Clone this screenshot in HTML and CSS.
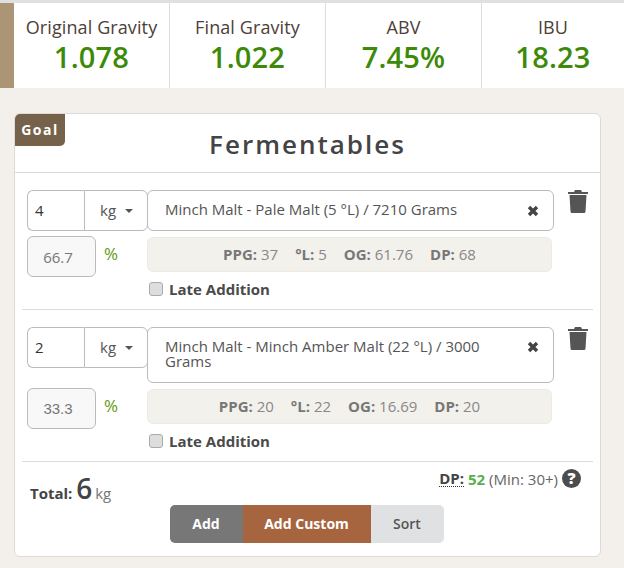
FILE: index.html
```html
<!DOCTYPE html>
<html lang="en">
<head>
    <meta charset="UTF-8">
    <meta name="viewport" content="width=device-width, initial-scale=1.0">
    <title>Fermentables</title>
    <link rel="stylesheet" href="styles.css">
</head>
<body>
    <div class="stats">
        <div class="stat"><div class="stat-label">Original Gravity</div><div class="stat-value">1.078</div></div>
        <div class="stat"><div class="stat-label">Final Gravity</div><div class="stat-value">1.022</div></div>
        <div class="stat"><div class="stat-label">ABV</div><div class="stat-value">7.45%</div></div>
        <div class="stat"><div class="stat-label">IBU</div><div class="stat-value">18.23</div></div>
    </div>

    <div class="card">
        <span class="goal">Goal</span>
        <h1 class="card-title">Fermentables</h1>

        <div class="row">
            <div class="amount">
                <input class="amount-input" type="text" value="4">
                <div class="unit">kg<span class="caret"></span></div>
            </div>
            <div class="picker">
                <span>Minch Malt - Pale Malt (5 °L) / 7210 Grams</span>
                <svg class="clear" viewBox="0 0 12 12"><path d="M2 2l8 8M10 2l-8 8"/></svg>
            </div>
            <svg class="trash" viewBox="0 0 20 23"><path d="M7 0h6l1 2h6v2H0V2h6zM1.500 5h17l-1 16.500q-.1 1.500-1.500 1.500H4q-1.400 0-1.500-1.500z"/></svg>

            <input class="percent" type="text" value="66.7">
            <span class="percent-sign">%</span>
            <div class="info">
                <span><b>PPG:</b> 37</span><span><b>°L:</b> 5</span><span><b>OG:</b> 61.76</span><span><b>DP:</b> 68</span>
            </div>

            <label class="late"><span class="check"></span>Late Addition</label>
        </div>

        <div class="row">
            <div class="amount">
                <input class="amount-input" type="text" value="2">
                <div class="unit">kg<span class="caret"></span></div>
            </div>
            <div class="picker picker-tall">
                <span>Minch Malt - Minch Amber Malt (22 °L) / 3000 Grams</span>
                <svg class="clear" viewBox="0 0 12 12"><path d="M2 2l8 8M10 2l-8 8"/></svg>
            </div>
            <svg class="trash" viewBox="0 0 20 23"><path d="M7 0h6l1 2h6v2H0V2h6zM1.500 5h17l-1 16.500q-.1 1.500-1.500 1.500H4q-1.400 0-1.500-1.500z"/></svg>

            <input class="percent percent-arial" type="text" value="33.3">
            <span class="percent-sign">%</span>
            <div class="info">
                <span><b>PPG:</b> 20</span><span><b>°L:</b> 22</span><span><b>OG:</b> 16.69</span><span><b>DP:</b> 20</span>
            </div>

            <label class="late"><span class="check"></span>Late Addition</label>
        </div>

        <div class="footer">
            <div class="total"><b>Total:</b> <span class="total-num">6</span> <span class="total-unit">kg</span></div>
            <div class="dp"><b class="dp-label">DP:</b> <b class="dp-num">52</b> (Min: 30+) <span class="help">?</span></div>
        </div>

        <div class="buttons">
            <button class="btn btn-add">Add</button>
            <button class="btn btn-custom">Add Custom</button>
            <button class="btn btn-sort">Sort</button>
        </div>
    </div>
</body>
</html>
```

FILE: styles.css
```css
* {
    box-sizing: border-box;
}
body {
    margin: 0;
    background-color: #f3f0ec;
    font-family: "Open Sans", sans-serif;
    color: #444;
}

/* stats bar */
.stats {
    display: grid;
    grid-template-columns: 155px 156px 156px 143px;
    height: 88px;
    margin-bottom: 25px;
    padding-left: 14px;
    background-color: #ab9575;
    border-top: 3px solid #e0e0e0;
}
.stat {
    background: white;
    border-left: 1px solid #e0dcd8;
    text-align: center;
    padding-top: 12px;
}
.stat:first-child {
    border-left: none;
}
.stat-label {
    font-size: 18px;
    line-height: 25px;
    letter-spacing: 0.1px;
    color: #4d4038;
}
.stat-value {
    font-size: 29px;
    line-height: 33px;
    font-weight: 600;
    letter-spacing: 0.2px;
    color: #3c8a08;
}

/* card */
.card {
    position: relative;
    width: 587px;
    height: 444px;
    margin-left: 14px;
    background: white;
    border: 1px solid #dedad6;
    border-radius: 6px;
}
.goal {
    position: absolute;
    top: 0;
    left: 0;
    width: 50px;
    height: 32px;
    background-color: #76624a;
    color: white;
    font-size: 14px;
    font-weight: 700;
    letter-spacing: 1.5px;
    line-height: 32px;
    text-align: center;
    border-radius: 5px 0 5px 0;
}
.card-title {
    margin: 0;
    height: 59px;
    border-bottom: 1px solid #dedad6;
    font-size: 26px;
    font-weight: 600;
    letter-spacing: 2px;
    line-height: 61px;
    text-align: center;
    color: #444;
}

/* fermentable row */
.row {
    display: grid;
    grid-template-columns: 69px 51px 407px 1fr;
    row-gap: 5px;
    margin: 0 7px;
    padding: 17px 5px 12px;
    border-bottom: 1px solid #dedad6;
}
.amount {
    grid-column: 1 / 3;
    display: flex;
    align-self: start;
    width: 121px;
    height: 41px;
}
.amount-input {
    width: 57px;
    height: 41px;
    padding: 0 7px 2px;
    border: 1px solid #bbb;
    border-right: none;
    border-radius: 6px 0 0 6px;
    font-family: "Open Sans", sans-serif;
    font-size: 15px;
    color: #333;
}
.unit {
    display: flex;
    align-items: center;
    flex: 1;
    padding: 0 0 2px 15px;
    border: 1px solid #bbb;
    border-radius: 0 6px 6px 0;
    font-size: 15px;
    color: #555;
}
.caret {
    margin: 2px 0 0 9px;
    border-top: 4px solid #555;
    border-left: 4px solid transparent;
    border-right: 4px solid transparent;
}
.picker {
    display: flex;
    align-items: center;
    justify-content: space-between;
    min-height: 41px;
    padding: 0 14px 2px 17px;
    border: 1px solid #bbb;
    border-radius: 6px;
    background: white;
    font-size: 15px;
    line-height: 15px;
    color: #555;
}
.picker span {
    max-width: 345px;
}
.picker-tall {
    height: 56px;
}
.picker-tall .clear {
    align-self: flex-start;
    margin-top: 13px;
}
.clear {
    flex: none;
    width: 12px;
    height: 12px;
    margin-top: 2px;
    fill: none;
    stroke: #444;
    stroke-width: 3.4;
}
.trash {
    width: 20px;
    height: 23px;
    margin-left: 14px;
    fill: #555;
}
.percent {
    width: 69px;
    height: 41px;
    padding: 0 7px 0 0;
    border: 1px solid #bbb;
    border-radius: 6px;
    background-color: #f8f8f8;
    font-family: "Open Sans", sans-serif;
    font-size: 15px;
    color: #777;
    text-align: center;
}
.percent-arial {
    font-family: "Liberation Sans", sans-serif;
}
.percent-sign {
    padding: 7px 0 0 8px;
    font-size: 17px;
    line-height: 22px;
    color: #5c9a10;
}
.info {
    display: flex;
    justify-content: center;
    gap: 17px;
    width: 405px;
    height: 35px;
    margin-top: 1px;
    background-color: #f3f1ec;
    border: 1px solid #eeebe6;
    border-radius: 6px;
    font-size: 15px;
    line-height: 33px;
    color: #888;
}
.info b {
    color: #777;
}
.late {
    grid-column: 3;
    display: flex;
    align-items: center;
    height: 16px;
    margin-top: -1px;
    padding-left: 2px;
    font-size: 15px;
    font-weight: 700;
    color: #4a4a4a;
}
.check {
    width: 14px;
    height: 14px;
    margin-right: 6px;
    background-color: #ddd;
    border: 1px solid #aaa;
    border-radius: 3px;
}

/* totals + buttons */
.footer {
    display: flex;
    justify-content: space-between;
    align-items: flex-start;
    height: 38px;
    padding: 6px 19px 0 15px;
}
.total {
    padding-top: 8px;
    font-size: 15px;
    line-height: 24px;
}
.total-num {
    font-size: 28px;
    font-weight: 600;
}
.total-unit {
    margin-left: -1px;
    color: #777;
}
.dp {
    font-size: 15px;
    line-height: 22px;
    color: #666;
    display: flex;
    align-items: center;
    gap: 4px;
}
.dp-label {
    margin-left: -1px;
    color: #444;
    border-bottom: 1px dotted #333;
    line-height: 15px;
}
.dp-num {
    color: #55b04d;
}
.help {
    width: 19px;
    height: 19px;
    margin-top: -1px;
    border-radius: 50%;
    background-color: #4d4d4d;
    color: white;
    font-size: 16px;
    font-weight: 800;
    line-height: 19px;
    text-align: center;
}
.buttons {
    display: flex;
    justify-content: center;
    margin-top: 5px;
    padding-right: 2px;
}
.btn {
    height: 38px;
    padding: 0 0 2px;
    border: none;
    font-family: "Open Sans", sans-serif;
    font-size: 14px;
    font-weight: 700;
    color: white;
}
.btn-add {
    width: 73px;
    background-color: #777;
    border-radius: 5px 0 0 5px;
}
.btn-custom {
    width: 128px;
    background-color: #a7653f;
}
.btn-sort {
    width: 73px;
    background-color: #e0e1e3;
    color: #555;
    font-weight: 600;
    border-radius: 0 5px 5px 0;
}
```
